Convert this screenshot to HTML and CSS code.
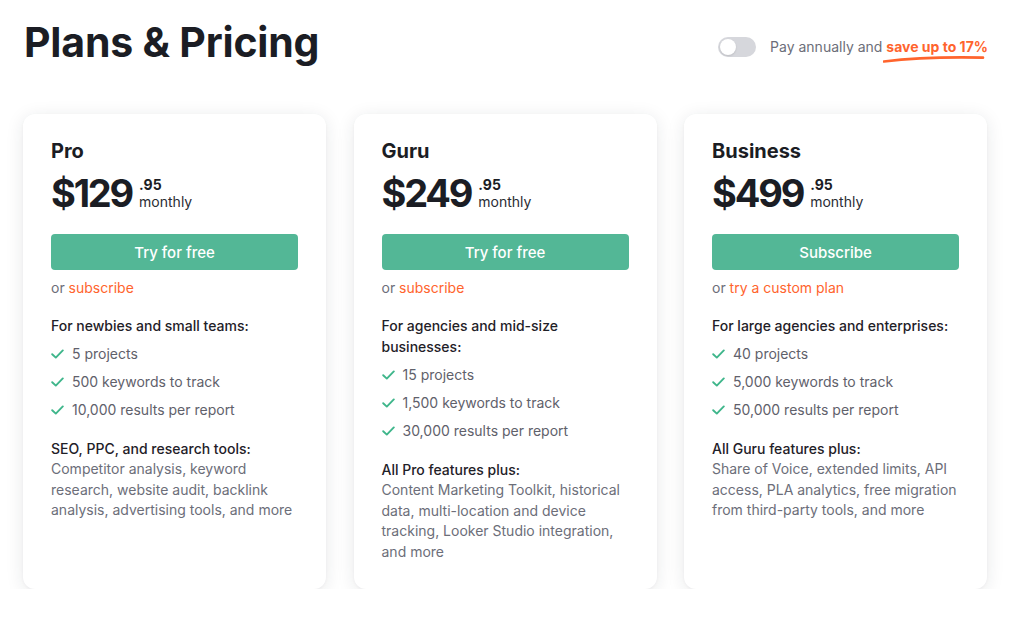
FILE: index.html
```html
<!DOCTYPE html>
<html lang="en">
<head>
<meta charset="utf-8">
<title>Plans &amp; Pricing</title>
<link rel="stylesheet" href="styles.css">
</head>
<body>
<header class="top">
  <h1 class="title">Plans &amp; Pricing</h1>
  <div class="annual">
    <span class="toggle"><span class="knob"></span></span>
    <span class="annual-text">Pay annually and <span class="save">save up to 17%<svg class="swoosh" width="102" height="8" viewBox="0 0 102 8"><path d="M1 6.5C25 3.5 60 1.8 100 2.6" fill="none" stroke="#ff642d" stroke-width="2.6" stroke-linecap="round"/></svg></span></span>
  </div>
</header>

<main class="cards">
  <section class="card">
    <h2 class="plan">Pro</h2>
    <div class="price"><span class="amount">$129</span><span class="sub"><span class="cents">.95</span><span class="per">monthly</span></span></div>
    <button class="cta">Try for free</button>
    <p class="alt">or <a class="link">subscribe</a></p>
    <h3 class="head">For newbies and small teams:</h3>
    <ul class="checks">
      <li><svg class="ck" width="13" height="10" viewBox="0 0 13 10"><path d="M1.2 5.2l3.6 3.4L11.8 1.4" fill="none" stroke="#3fb68b" stroke-width="1.9" stroke-linecap="round" stroke-linejoin="round"/></svg>5 projects</li>
      <li><svg class="ck" width="13" height="10" viewBox="0 0 13 10"><path d="M1.2 5.2l3.6 3.4L11.8 1.4" fill="none" stroke="#3fb68b" stroke-width="1.9" stroke-linecap="round" stroke-linejoin="round"/></svg>500 keywords to track</li>
      <li><svg class="ck" width="13" height="10" viewBox="0 0 13 10"><path d="M1.2 5.2l3.6 3.4L11.8 1.4" fill="none" stroke="#3fb68b" stroke-width="1.9" stroke-linecap="round" stroke-linejoin="round"/></svg>10,000 results per report</li>
    </ul>
    <h3 class="head head2">SEO, PPC, and research tools:</h3>
    <p class="desc">Competitor analysis, keyword research, website audit, backlink analysis, advertising tools, and more</p>
  </section>

  <section class="card">
    <h2 class="plan">Guru</h2>
    <div class="price"><span class="amount">$249</span><span class="sub"><span class="cents">.95</span><span class="per">monthly</span></span></div>
    <button class="cta">Try for free</button>
    <p class="alt">or <a class="link">subscribe</a></p>
    <h3 class="head">For agencies and mid-size businesses:</h3>
    <ul class="checks">
      <li><svg class="ck" width="13" height="10" viewBox="0 0 13 10"><path d="M1.2 5.2l3.6 3.4L11.8 1.4" fill="none" stroke="#3fb68b" stroke-width="1.9" stroke-linecap="round" stroke-linejoin="round"/></svg>15 projects</li>
      <li><svg class="ck" width="13" height="10" viewBox="0 0 13 10"><path d="M1.2 5.2l3.6 3.4L11.8 1.4" fill="none" stroke="#3fb68b" stroke-width="1.9" stroke-linecap="round" stroke-linejoin="round"/></svg>1,500 keywords to track</li>
      <li><svg class="ck" width="13" height="10" viewBox="0 0 13 10"><path d="M1.2 5.2l3.6 3.4L11.8 1.4" fill="none" stroke="#3fb68b" stroke-width="1.9" stroke-linecap="round" stroke-linejoin="round"/></svg>30,000 results per report</li>
    </ul>
    <h3 class="head head2">All Pro features plus:</h3>
    <p class="desc">Content Marketing Toolkit, historical data, multi-location and device tracking, Looker Studio integration, and more</p>
  </section>

  <section class="card">
    <h2 class="plan">Business</h2>
    <div class="price"><span class="amount">$499</span><span class="sub"><span class="cents">.95</span><span class="per">monthly</span></span></div>
    <button class="cta">Subscribe</button>
    <p class="alt">or <a class="link">try a custom plan</a></p>
    <h3 class="head">For large agencies and enterprises:</h3>
    <ul class="checks">
      <li><svg class="ck" width="13" height="10" viewBox="0 0 13 10"><path d="M1.2 5.2l3.6 3.4L11.8 1.4" fill="none" stroke="#3fb68b" stroke-width="1.9" stroke-linecap="round" stroke-linejoin="round"/></svg>40 projects</li>
      <li><svg class="ck" width="13" height="10" viewBox="0 0 13 10"><path d="M1.2 5.2l3.6 3.4L11.8 1.4" fill="none" stroke="#3fb68b" stroke-width="1.9" stroke-linecap="round" stroke-linejoin="round"/></svg>5,000 keywords to track</li>
      <li><svg class="ck" width="13" height="10" viewBox="0 0 13 10"><path d="M1.2 5.2l3.6 3.4L11.8 1.4" fill="none" stroke="#3fb68b" stroke-width="1.9" stroke-linecap="round" stroke-linejoin="round"/></svg>50,000 results per report</li>
    </ul>
    <h3 class="head head2">All Guru features plus:</h3>
    <p class="desc">Share of Voice, extended limits, API access, PLA analytics, free migration from third-party tools, and more</p>
  </section>
</main>
</body>
</html>
```

FILE: styles.css
```css
* { box-sizing: border-box; }

body {
  margin: 0;
  background: #ffffff;
  font-family: Inter, "Noto Sans", "Liberation Sans", sans-serif;
  color: #1f2128;
}

.top {
  display: flex;
  justify-content: space-between;
  align-items: flex-start;
  padding: 18px 36px 0 24px;
}

.title {
  margin: 0;
  font-size: 41px;
  line-height: 48px;
  font-weight: 700;
  letter-spacing: -0.2px;
  color: #1b1d24;
}

.annual {
  display: flex;
  align-items: center;
  gap: 14px;
  margin-top: 19px;
}

.toggle {
  display: flex;
  align-items: center;
  width: 38px;
  height: 20px;
  border-radius: 10px;
  background: #d6d7dc;
  padding: 2px;
}

.knob {
  width: 16px;
  height: 16px;
  border-radius: 50%;
  background: #ffffff;
  box-shadow: 0 1px 2px rgba(0,0,0,0.12);
}

.annual-text {
  font-size: 14px;
  line-height: 20px;
  color: #6c6e79;
}

.save {
  position: relative;
  color: #ff642d;
  font-weight: 700;
}

.swoosh {
  position: absolute;
  left: -3px;
  top: 17px;
}

.cards {
  display: flex;
  gap: 27.5px;
  padding-left: 23px;
  margin-top: 48px;
}

.card {
  width: 303px;
  height: 475px;
  background: #ffffff;
  border-radius: 12px;
  box-shadow: 0 3px 18px rgba(30, 35, 50, 0.10), 0 1px 3px rgba(30, 35, 50, 0.04);
  padding: 25px 28px 0 28px;
}

.plan {
  margin: 0;
  font-size: 20px;
  line-height: 24px;
  font-weight: 700;
  color: #1b1d24;
}

.price {
  display: flex;
  align-items: flex-end;
  margin-top: 8px;
}

.amount {
  font-size: 38px;
  line-height: 44px;
  font-weight: 700;
  letter-spacing: -2.2px;
  color: #1b1d24;
}

.sub {
  display: flex;
  flex-direction: column;
  margin-left: 7px;
  padding-bottom: 5px;
}

.cents {
  font-size: 14px;
  line-height: 14px;
  font-weight: 700;
  color: #1b1d24;
  margin-bottom: 1px;
}

.per {
  font-size: 14px;
  line-height: 17px;
  color: #2a2c33;
}

.cta {
  display: block;
  width: 100%;
  height: 36px;
  margin-top: 19px;
  border: 0;
  border-radius: 4px;
  background: #53b796;
  color: #ffffff;
  font-family: inherit;
  font-size: 15px;
  font-weight: 500;
}

.alt {
  margin: 7px 0 0;
  font-size: 14px;
  line-height: 21px;
  color: #6c6e79;
}

.link {
  color: #ff642d;
}

.head {
  margin: 17px 0 0;
  font-size: 14px;
  line-height: 21px;
  font-weight: 500;
  color: #1f2128;
}

.checks {
  list-style: none;
  margin: 0;
  padding: 0;
}

.checks li {
  display: flex;
  align-items: center;
  margin-top: 7px;
  font-size: 14px;
  line-height: 21px;
  color: #5f616b;
}

.ck {
  margin-right: 8px;
  flex: none;
}

.head2 {
  margin-top: 18px;
}

.desc {
  margin: 0;
  font-size: 14px;
  line-height: 20.5px;
  color: #6c6e79;
}
```
